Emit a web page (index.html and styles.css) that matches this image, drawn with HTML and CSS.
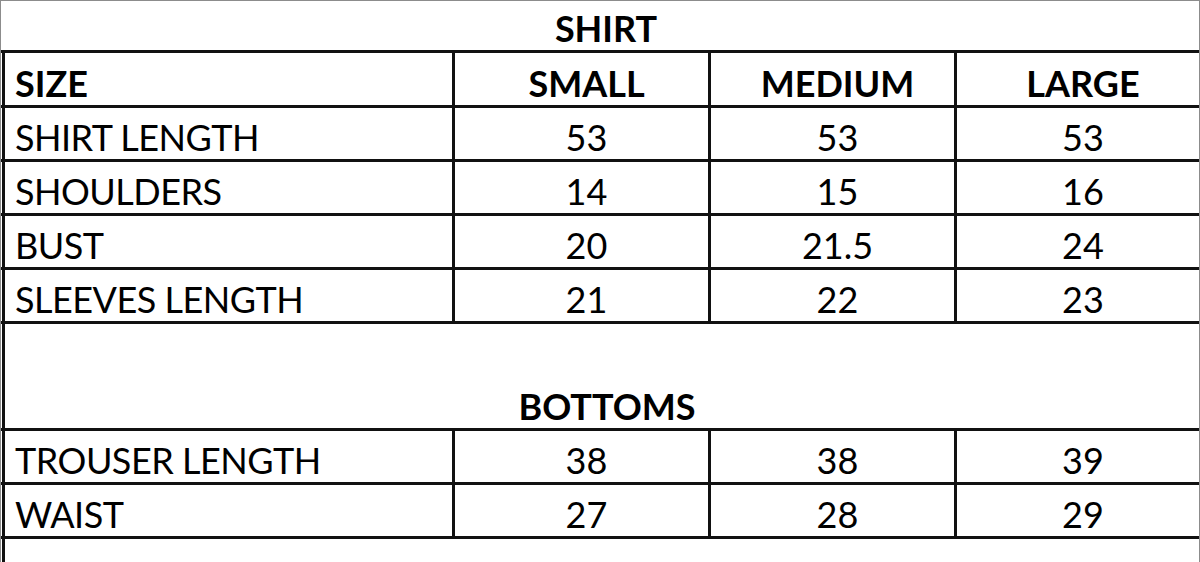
FILE: index.html
```html
<!DOCTYPE html>
<html>
<head>
<meta charset="utf-8">
<link rel="stylesheet" href="styles.css">
</head>
<body>
<div class="sheet">
  <div class="title"><span>SHIRT</span></div>
  <div class="row row-head">
    <div class="cell label bold">SIZE</div>
    <div class="cell num bold">SMALL</div>
    <div class="cell num bold">MEDIUM</div>
    <div class="cell num last bold">LARGE</div>
  </div>
  <div class="row">
    <div class="cell label">SHIRT LENGTH</div>
    <div class="cell num">53</div>
    <div class="cell num">53</div>
    <div class="cell num last">53</div>
  </div>
  <div class="row">
    <div class="cell label">SHOULDERS</div>
    <div class="cell num">14</div>
    <div class="cell num">15</div>
    <div class="cell num last">16</div>
  </div>
  <div class="row">
    <div class="cell label">BUST</div>
    <div class="cell num">20</div>
    <div class="cell num">21.5</div>
    <div class="cell num last">24</div>
  </div>
  <div class="row">
    <div class="cell label">SLEEVES LENGTH</div>
    <div class="cell num">21</div>
    <div class="cell num">22</div>
    <div class="cell num last">23</div>
  </div>
  <div class="merged">
    <div class="merged-cell bold">BOTTOMS</div>
  </div>
  <div class="row">
    <div class="cell label">TROUSER LENGTH</div>
    <div class="cell num">38</div>
    <div class="cell num">38</div>
    <div class="cell num last">39</div>
  </div>
  <div class="row">
    <div class="cell label">WAIST</div>
    <div class="cell num">27</div>
    <div class="cell num">28</div>
    <div class="cell num last">29</div>
  </div>
  <div class="tail">
    <div class="tail-cell"></div>
  </div>
</div>
</body>
</html>
```

FILE: styles.css
```css
html, body {
  margin: 0;
  padding: 0;
  background: #ffffff;
}

.sheet {
  width: 1200px;
  height: 562px;
  box-sizing: border-box;
  border: 1px solid #8c8c8c;
  border-bottom: none;
  display: flex;
  flex-direction: column;
  font-family: "Lato", "Open Sans", sans-serif;
  font-size: 36px;
  line-height: 36px;
  color: #000000;
  overflow: hidden;
}

.bold {
  font-weight: 700;
}

.title {
  border-bottom: 3px solid #111111;
  display: flex;
  align-items: flex-end;
  justify-content: center;
  padding-left: 12px;
  padding-bottom: 4px;
  box-sizing: content-box;
  height: 45px;
  font-weight: 700;
}

.row {
  display: grid;
  grid-template-columns: 453px 256px 246px 1fr;
  padding-left: 1px;
  height: 51px;
  border-bottom: 3px solid #111111;
}

.row-head {
  height: 52px;
}

.cell {
  display: flex;
  align-items: flex-end;
  padding-bottom: 4px;
  border-right: 3px solid #111111;
  box-sizing: border-box;
  white-space: nowrap;
}

.label {
  border-left: 3px solid #111111;
  padding-left: 10px;
  letter-spacing: -0.5px;
}

.label.bold {
  letter-spacing: 0;
}

.num {
  justify-content: center;
  padding-left: 10px;
}

.last {
  border-right: none;
}

.merged {
  padding-left: 1px;
  height: 104px;
  border-bottom: 3px solid #111111;
  display: flex;
}

.merged-cell {
  flex: 1;
  border-left: 3px solid #111111;
  display: flex;
  align-items: flex-end;
  justify-content: center;
  padding-left: 10px;
  padding-bottom: 4px;
}

.tail {
  flex: 1;
  padding-left: 1px;
  display: flex;
}

.tail-cell {
  flex: 1;
  border-left: 3px solid #111111;
}
```
